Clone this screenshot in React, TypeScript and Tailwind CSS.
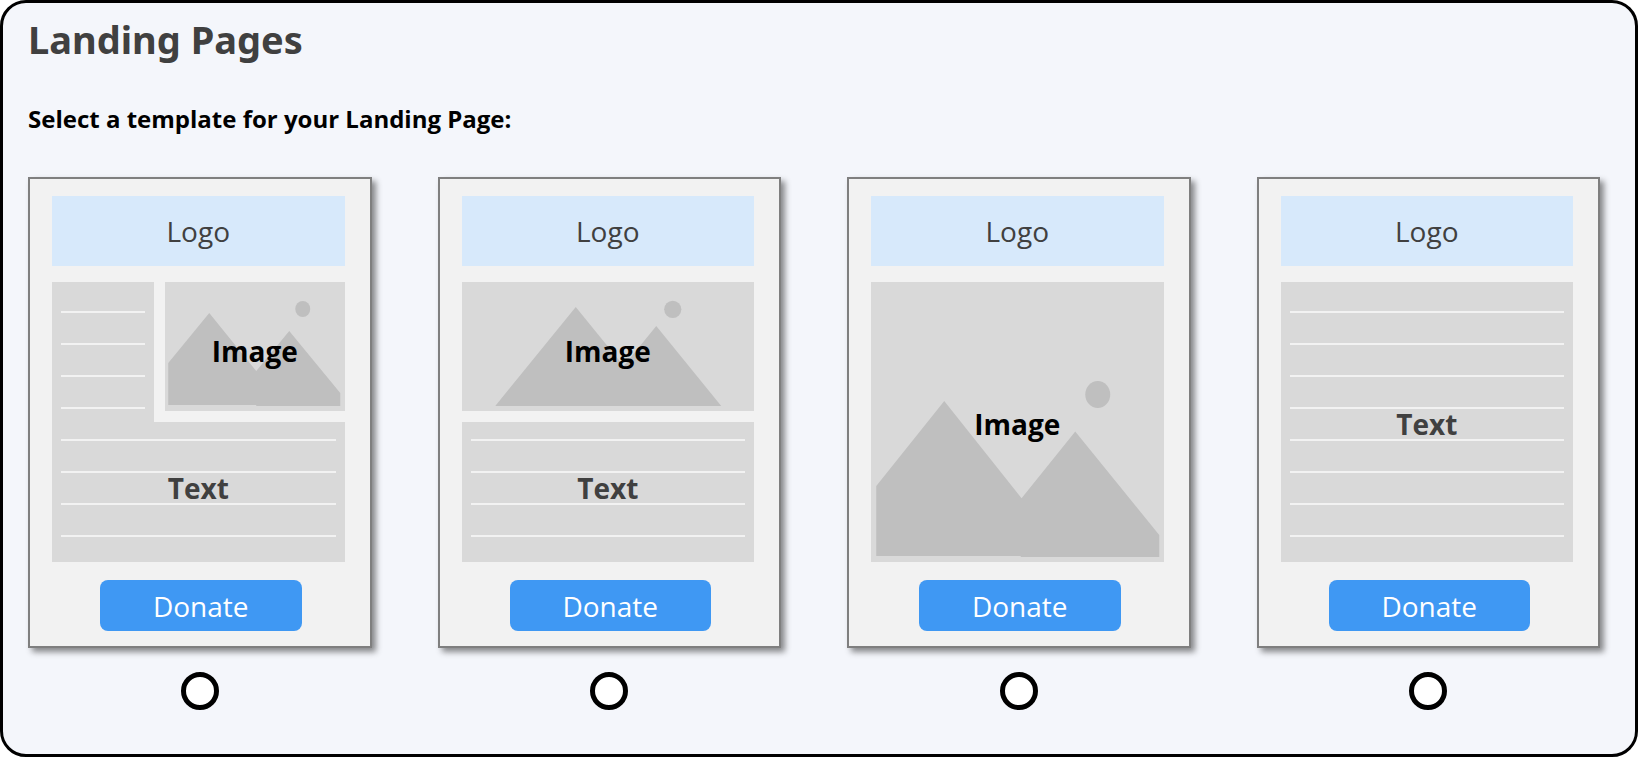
import React, { useState } from 'react';

type Layout = 'split' | 'banner' | 'image' | 'text';

const TEMPLATES: { id: Layout; name: string }[] = [
  { id: 'split', name: 'Text with side image' },
  { id: 'banner', name: 'Image above text' },
  { id: 'image', name: 'Image only' },
  { id: 'text', name: 'Text only' },
];

const Lines = ({ count }: { count: number }) => (
  <div className="flex flex-col gap-[30px]">
    {Array.from({ length: count }, (_, i) => (
      <div key={i} className="h-0.5 bg-[#f2f2f2]" />
    ))}
  </div>
);

const TextLabel = ({ className = '' }: { className?: string }) => (
  <span className={`absolute inset-0 flex items-center justify-center text-[28px] leading-8 font-bold text-[#404040] ${className}`}>
    Text
  </span>
);

const ImageLabel = ({ className = '' }: { className?: string }) => (
  <span className={`absolute inset-0 flex items-center justify-center text-[28px] leading-8 font-bold text-black ${className}`}>
    Image
  </span>
);

const SplitBody = () => (
  <div className="flex flex-col">
    <div className="flex gap-[11px]">
      <div className="w-[102px] h-[140px] shrink-0 bg-[#d9d9d9] px-[9px] pt-[29px]">
        <Lines count={4} />
      </div>
      <div className="relative flex-1 h-[129px] bg-[#d9d9d9]">
        <svg viewBox="0 0 179 129" className="w-full h-full" fill="#bfbfbf" aria-hidden="true">
          <path d="M3 81 44 31 91 89 124 49 175 111V124H91V123H3Z" />
          <ellipse cx="137.5" cy="27" rx="7.5" ry="8" />
        </svg>
        <ImageLabel className="pt-2" />
      </div>
    </div>
    <div className="relative h-[140px] bg-[#d9d9d9] px-[9px] pt-[17px]">
      <Lines count={4} />
      <TextLabel className="pb-2" />
    </div>
  </div>
);

const BannerBody = () => (
  <div className="flex flex-col gap-[11px]">
    <div className="relative h-[129px] bg-[#d9d9d9]">
      <svg viewBox="0 0 292 129" className="w-full h-full" fill="#bfbfbf" aria-hidden="true">
        <path d="M33 124 113.5 25 161.5 84 194 44 259 124Z" />
        <circle cx="210.5" cy="27.3" r="8.6" />
      </svg>
      <ImageLabel className="pt-2" />
    </div>
    <div className="relative h-[140px] bg-[#d9d9d9] px-[9px] pt-[17px]">
      <Lines count={4} />
      <TextLabel className="pb-2" />
    </div>
  </div>
);

const ImageBody = () => (
  <div className="relative h-[280px] bg-[#d9d9d9]">
    <svg viewBox="0 0 292 280" className="w-full h-full" fill="#bfbfbf" aria-hidden="true">
      <path d="M5 204 73 119 150.3 216.3 204 149.5 288 253V275H149.5V274H5Z" />
      <ellipse cx="226.5" cy="112.5" rx="12.5" ry="13.5" />
    </svg>
    <ImageLabel className="pt-1" />
  </div>
);

const TextBody = () => (
  <div className="relative h-[280px] bg-[#d9d9d9] px-[9px] pt-[29px]">
    <Lines count={8} />
    <TextLabel className="pt-1" />
  </div>
);

const TemplateCard = ({ layout }: { layout: Layout }) => (
  <div className="w-full border-2 border-[#7f7f7f] bg-[#f2f2f2] pt-[17px] pb-[15px] pl-[22px] pr-[25px] shadow-[4px_4px_6px_rgba(0,0,0,0.45)]">
    <div className="h-[70px] bg-[#d7e9fb] flex items-center justify-center text-[28px] leading-8 text-[#404040]">Logo</div>
    <div className="mt-4">
      {layout === 'split' && <SplitBody />}
      {layout === 'banner' && <BannerBody />}
      {layout === 'image' && <ImageBody />}
      {layout === 'text' && <TextBody />}
    </div>
    <div className="mt-[18px] pl-12 pr-[43px]">
      <button type="button" className="w-full h-[51px] rounded-lg bg-[#3f98f3] text-[28px] leading-8 text-white">
        Donate
      </button>
    </div>
  </div>
);

const App: React.FC = () => {
  const [selected, setSelected] = useState<Layout | null>(null);

  return (
    <main className="min-h-screen border-[3px] border-black rounded-[26px] bg-[#f4f6fb] pt-3 pl-[25px] pr-[35px] pb-10 font-['Open_Sans','Carlito',sans-serif]">
      <h1 className="text-[38px] leading-[48px] font-bold text-[#404040] font-['Noto_Sans','Tahoma',sans-serif]">
        Landing Pages
      </h1>
      <fieldset className="mt-10">
        <legend className="text-2xl leading-8 font-bold text-black">Select a template for your Landing Page:</legend>
        <div className="mt-[42px] grid grid-cols-4 gap-[66px]">
          {TEMPLATES.map(t => (
            <div key={t.id} className="flex flex-col items-center">
              <TemplateCard layout={t.id} />
              <input
                type="radio"
                name="template"
                aria-label={t.name}
                checked={selected === t.id}
                onChange={() => setSelected(t.id)}
                className="mt-6 size-[38px] appearance-none rounded-full border-[5px] border-black bg-white checked:bg-[#3f98f3]"
              />
            </div>
          ))}
        </div>
      </fieldset>
    </main>
  );
};

export default App;
